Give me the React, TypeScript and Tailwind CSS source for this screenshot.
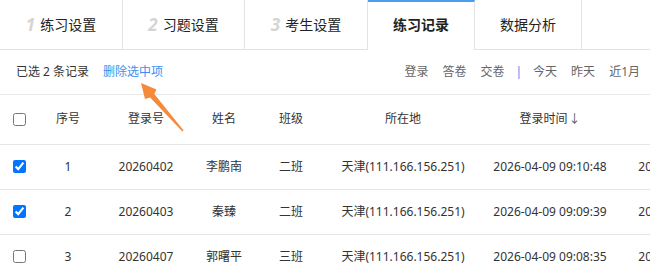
import React from "react";

const tabs = [
  { num: "1", label: "练习设置", w: "w-[123px]" },
  { num: "2", label: "习题设置", w: "w-[122px]" },
  { num: "3", label: "考生设置", w: "w-[123px]" },
  { num: "", label: "练习记录", w: "w-[107px]", active: true },
  { num: "", label: "数据分析", w: "w-[107px]" },
];

const rows = [
  { checked: true, no: 1, id: "20260402", name: "李鹏南", cls: "二班", loc: "天津(111.166.156.251)", login: "2026-04-09 09:10:48", submit: "2026-04-09 09:32:15" },
  { checked: true, no: 2, id: "20260403", name: "秦臻", cls: "二班", loc: "天津(111.166.156.251)", login: "2026-04-09 09:09:39", submit: "2026-04-09 09:30:02" },
  { checked: false, no: 3, id: "20260407", name: "郭曙平", cls: "三班", loc: "天津(111.166.156.251)", login: "2026-04-09 09:08:35", submit: "2026-04-09 09:28:47" },
];

function Check({ checked }: { checked: boolean }) {
  return (
    <input
      type="checkbox"
      checked={checked}
      readOnly
      className="m-0 block h-[13px] w-[13px] accent-[#0075ff]"
    />
  );
}

export default function App() {
  return (
    <div className="relative h-[278px] w-[650px] overflow-hidden bg-white font-['Noto_Sans','Noto_Sans_CJK_SC',sans-serif] text-[#333]">
      {/* tabs */}
      <div className="flex h-[50px]">
        {tabs.map((t) => (
          <div
            key={t.label}
            className={`${t.w} flex shrink-0 items-center justify-center border-r border-[#e3e3e3] text-[14px] ${
              t.active
                ? "border-t-2 border-t-[#4a9cf0] pb-[2px] font-bold text-[#222]"
                : "border-b border-b-[#e3e3e3] text-[#222]"
            }`}
          >
            {t.num && (
              <span className="mr-[5px] text-[17px] font-bold italic leading-none text-[#d4d4d4]">
                {t.num}
              </span>
            )}
            <span className="leading-none">{t.label}</span>
          </div>
        ))}
        <div className="flex-1 border-b border-[#e3e3e3]" />
      </div>

      {/* toolbar */}
      <div className="flex h-[45px] items-center justify-between border-b border-[#e8e8e8] pl-[16px] pr-[10px] text-[12px]">
        <div className="flex items-center">
          <span className="text-[#333]">已选 2 条记录</span>
          <span className="ml-[14px] text-[#3d8ef0]">删除选中项</span>
        </div>
        <div className="flex items-center gap-[14px] text-[#666]">
          <span>登录</span>
          <span>答卷</span>
          <span>交卷</span>
          <span className="-mx-[3px] text-[#3d8ef0]">|</span>
          <span>今天</span>
          <span>昨天</span>
          <span>近1月</span>
        </div>
      </div>

      {/* table */}
      <table className="w-[766px] table-fixed border-collapse text-[12px]">
        <colgroup>
          <col className="w-[40px]" />
          <col className="w-[56px]" />
          <col className="w-[100px]" />
          <col className="w-[56px]" />
          <col className="w-[78px]" />
          <col className="w-[146px]" />
          <col className="w-[148px]" />
          <col className="w-[142px]" />
        </colgroup>
        <thead>
          <tr className="h-[49px] border-b border-[#e5e5e5] text-[#333]">
            <th className="pl-[13px] font-normal">
              <Check checked={false} />
            </th>
            <th className="text-center font-normal">序号</th>
            <th className="text-center font-normal">登录号</th>
            <th className="text-center font-normal">姓名</th>
            <th className="text-center font-normal">班级</th>
            <th className="text-center font-normal">所在地</th>
            <th className="text-center font-normal">
              登录时间<span className="ml-[1px] text-[#555]">↓</span>
            </th>
            <th className="text-center font-normal">交卷时间</th>
          </tr>
        </thead>
        <tbody>
          {rows.map((r) => (
            <tr key={r.no} className="h-[45px] border-b border-[#e5e5e5]">
              <td className="pl-[13px]">
                <Check checked={r.checked} />
              </td>
              <td className="text-center">{r.no}</td>
              <td className="text-center">{r.id}</td>
              <td className="text-center">{r.name}</td>
              <td className="text-center">{r.cls}</td>
              <td className="whitespace-nowrap text-center">{r.loc}</td>
              <td className="whitespace-nowrap text-center">{r.login}</td>
              <td className="whitespace-nowrap text-center">{r.submit}</td>
            </tr>
          ))}
        </tbody>
      </table>

      {/* annotation arrow */}
      <svg
        className="pointer-events-none absolute left-0 top-0"
        width="650"
        height="278"
        viewBox="0 0 650 278"
      >
        <polygon
          points="141,83 156.5,89.5 154.3,94 183.6,130.6 182.4,131.4 150.1,97.6 145,99"
          fill="#f58a3a"
        />
      </svg>
    </div>
  );
}
